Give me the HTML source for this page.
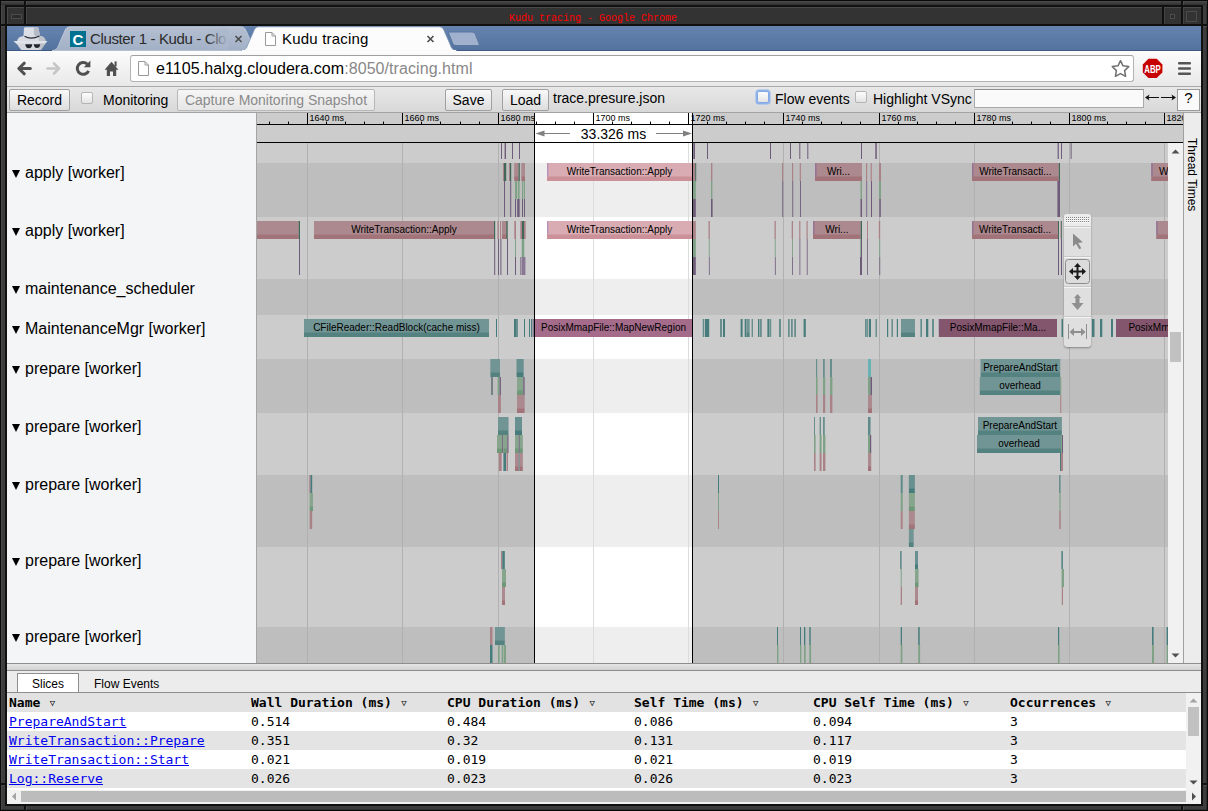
<!DOCTYPE html>
<html><head><meta charset="utf-8"><title>Kudu tracing - Google Chrome</title>
<style>
html,body{margin:0;padding:0}
body{width:1208px;height:811px;position:relative;overflow:hidden;background:#333;font-family:"Liberation Sans",sans-serif;font-size:14px;color:#000}
.a{position:absolute}
.btn{position:absolute;box-sizing:border-box;height:22px;border:1px solid #a0a0a0;border-radius:2px;background:linear-gradient(#f9f9f9,#dddddd);font-size:14px;line-height:20px;text-align:center;color:#000}
.cb{position:absolute;box-sizing:border-box;width:12px;height:12px;border:1px solid #b4b4b4;border-radius:2px;background:linear-gradient(#fdfdfd,#e4e4e4)}
.lbl{position:absolute;left:25px;font-size:16px;line-height:18px;white-space:nowrap;margin-top:1px}
.lbl i{position:absolute;left:-13px;top:5.5px;width:0;height:0;border-left:4.2px solid transparent;border-right:4.2px solid transparent;border-top:8.2px solid #000}
.th,.td{position:absolute;font-family:"DejaVu Sans Mono",monospace;font-size:13px;line-height:19px;white-space:nowrap}
.th{font-weight:bold;top:693px}
.th span{font-weight:normal;font-size:9px;position:relative;top:-1px;left:1.500px}
.lnk{color:#00e;text-decoration:underline}
.row{position:absolute;left:7px;width:1179px;height:19px}
</style></head><body>
<!-- window manager frame -->
<div class="a" style="left:0;top:0;width:1208px;height:811px;box-sizing:border-box;border:1px solid #0a0a0a;background:#3d3d3d"></div>
<div class="a" style="left:1px;top:1px;width:1206px;height:809px;box-sizing:border-box;border:1px solid #474747;border-right-color:#2e2e2e;border-bottom-color:#2e2e2e"></div>
<div class="a" style="left:1px;top:1px;width:1206px;height:4px;background:linear-gradient(#4b4b4b,#2f2f2f)"></div>
<div class="a" style="left:5px;top:5px;width:1198px;height:801px;box-sizing:border-box;border:2px solid #111;background:#333"></div>
<div class="a" style="left:7px;top:7px;width:1194px;height:1px;background:#4a4a4a"></div>
<div class="a" style="left:7px;top:7px;width:1px;height:17px;background:#4a4a4a"></div>
<div class="a" style="left:7px;top:24px;width:1194px;height:2px;background:#101010"></div>
<div class="a" style="left:24px;top:0;width:2px;height:26px;background:#101010"></div>
<div class="a" style="left:26px;top:1px;width:1px;height:4px;background:#4c4c4c"></div>
<div class="a" style="left:26px;top:8px;width:1px;height:16px;background:#444"></div>
<div class="a" style="left:0;top:24px;width:7px;height:2px;background:#101010"></div>
<div class="a" style="left:1px;top:26px;width:4px;height:1px;background:#4c4c4c"></div>
<div class="a" style="left:1181px;top:0;width:2px;height:26px;background:#101010"></div>
<div class="a" style="left:1183px;top:1px;width:1px;height:4px;background:#4c4c4c"></div>
<div class="a" style="left:1183px;top:8px;width:1px;height:16px;background:#444"></div>
<div class="a" style="left:1162px;top:7px;width:2px;height:18px;background:#101010"></div>
<div class="a" style="left:1164px;top:8px;width:1px;height:16px;background:#444"></div>
<div class="a" style="left:1201px;top:24px;width:7px;height:2px;background:#101010"></div>
<div class="a" style="left:1203px;top:26px;width:4px;height:1px;background:#4c4c4c"></div>
<div class="a" style="left:1181px;top:804px;width:2px;height:7px;background:#101010"></div>
<div class="a" style="left:1183px;top:806px;width:1px;height:4px;background:#4c4c4c"></div>
<div class="a" style="left:1201px;top:783px;width:7px;height:2px;background:#101010"></div>
<div class="a" style="left:1203px;top:785px;width:4px;height:1px;background:#4c4c4c"></div>
<div class="a" style="left:24px;top:804px;width:2px;height:7px;background:#101010"></div>
<div class="a" style="left:26px;top:806px;width:1px;height:4px;background:#4c4c4c"></div>
<div class="a" style="left:0;top:783px;width:7px;height:2px;background:#101010"></div>
<div class="a" style="left:1px;top:785px;width:4px;height:1px;background:#4c4c4c"></div>
<div class="a" style="left:11px;top:14px;width:11px;height:5px;box-sizing:border-box;border:1px solid #4c4c4c;background:#2c2c2c"></div>
<div class="a" style="left:1170px;top:14px;width:5px;height:5px;box-sizing:border-box;border:1px solid #4c4c4c;background:#2c2c2c"></div>
<div class="a" style="left:1186px;top:11px;width:11px;height:11px;box-sizing:border-box;border:1px solid #4c4c4c;background:#333"></div>
<div class="a" style="left:509px;top:12px;width:170px;height:14px;font-family:'Liberation Mono',monospace;font-size:10px;line-height:14px;color:#f00;white-space:pre;transform:scaleY(1.12)">Kudu tracing - Google Chrome</div>

<!-- chrome tab strip -->
<div class="a" style="left:7px;top:26px;width:1194px;height:25px;background:linear-gradient(#6684af,#53729e)"></div>
<div class="a" style="left:7px;top:50px;width:1194px;height:1px;background:#3f5a85"></div>
<svg class="a" style="left:7px;top:26px" width="1194" height="25" viewBox="7 26 1194 25">
 <defs><linearGradient id="tg" x1="0" y1="0" x2="0" y2="1"><stop offset="0" stop-color="#b4bfd0"/><stop offset="1" stop-color="#a2b0c7"/></linearGradient></defs>
 <path d="M52 50.5 C57 50.5 58 47 59.5 43 L65 30.500 C66.500 27 68 26.800 72 26.800 L239 26.800 C243 26.800 244.500 27 246 30.500 L251.500 43 C253 47 254 50.500 259 50.500 Z" fill="url(#tg)" stroke="#c6cfdc" stroke-width="0.800"/>
 <path d="M241 51 C246 50.5 247 47 248.5 43 L254 30.500 C255.500 27 257 26.800 261 26.800 L437 26.800 C441 26.800 442.500 27 444 30.500 L449.500 43 C451 47 452 50.500 457 51 Z" fill="#fcfcfc" stroke="#7e93b5" stroke-width="0.800"/>
 <rect x="242" y="50" width="214" height="1" fill="#f9f9f9"/>
 <path d="M449.500 32 L472 32 C474 32 475 33 475.500 34.500 L479 43.500 C479.500 45 479 45.500 477.500 45.500 L456 45.500 C454 45.500 453 44.500 452.500 43 L449 34 C448.500 32.500 448.500 32 449.500 32 Z" fill="#9fb1cd" stroke="#5a759f" stroke-width="1"/>
 <!-- incognito -->
 <g>
  <path d="M16 43 L45.500 43 L40.800 50 L21.200 50 Z" fill="#d4d7de"/>
  <path d="M23.300 39 L24 28.500 Q24.100 27.200 25.500 27.200 L36.800 27.200 Q38.300 27.200 38.600 28.600 L40.500 39 Z" fill="#dcdfe6"/>
  <path d="M34 27.200 L36.800 27.200 Q38.300 27.200 38.600 28.600 L40.500 39 L35.500 39 Q33 33 34 27.200 Z" fill="#b7bbc5"/>
  <path d="M17 41.500 Q17.500 36.200 24 36 L40 36 Q45.500 36.500 45.500 41.500 Z" fill="#d9dce3"/>
  <path d="M38 36 L40 36 Q45.500 36.500 45.500 41.500 L39 41.500 Z" fill="#c0c4cd"/>
  <path d="M13.500 41 L47.500 41 L45.500 43.600 L16 43.600 Z" fill="#e0e3e9"/>
  <path d="M38 43.600 L45.500 43.600 L41 50 L39.500 50 Z" fill="#bcc0c9"/>
  <path d="M24.500 36.300 Q31 40.200 39.500 36" stroke="#2a2d33" stroke-width="1.100" fill="none"/>
  <path d="M25.300 44.300 L32.300 44.300 Q32 48.300 28.800 48.300 Q25.600 48.300 25.300 44.300 Z M33.700 44.300 L40.200 44.300 Q39.900 48 37 48 Q34 48 33.700 44.300 Z" fill="#22252b"/>
 </g>
 <!-- favicon C -->
 <rect x="70" y="31" width="16" height="16" fill="#00728f"/>
 <text x="78" y="44.500" text-anchor="middle" font-family="Liberation Sans,sans-serif" font-weight="bold" font-size="15" fill="#fff">C</text>
 <!-- page icon -->
 <path d="M265.500 32.500 L272 32.500 L275.500 36 L275.500 45.500 L265.500 45.500 Z" fill="#fff" stroke="#999" stroke-width="1"/>
 <path d="M272 32.500 L272 36 L275.500 36" fill="none" stroke="#999" stroke-width="1"/>
 <!-- close x -->
 <path d="M235.500 36 L241.500 42 M241.500 36 L235.500 42" stroke="#4d4d4d" stroke-width="1.600"/>
 <path d="M427.500 36 L433.500 42 M433.500 36 L427.500 42" stroke="#4d4d4d" stroke-width="1.600"/>
</svg>
<div class="a" style="left:90px;top:29px;width:140px;height:20px;font-size:15px;letter-spacing:-0.37px;line-height:20px;white-space:nowrap;overflow:hidden;color:#2a2a2a">Cluster 1 - Kudu - Clo</div>
<div class="a" style="left:206px;top:29px;width:22px;height:20px;background:linear-gradient(90deg,rgba(171,184,204,0),#abb8cc)"></div>
<div class="a" style="left:282px;top:29px;width:140px;height:20px;font-size:15px;letter-spacing:0.19px;line-height:20px;white-space:nowrap;color:#000">Kudu tracing</div>

<!-- chrome toolbar -->
<div class="a" style="left:7px;top:51px;width:1194px;height:35px;background:linear-gradient(#fcfcfc,#e8e8e8)"></div>
<div class="a" style="left:7px;top:86px;width:1194px;height:1px;background:#a9a9a9"></div>
<div class="a" style="left:130px;top:55px;width:1004px;height:27px;box-sizing:border-box;border:1px solid #b3b3b3;border-top-color:#a0a0a0;border-radius:3px;background:#fff"></div>
<div class="a" style="left:156px;top:59px;height:20px;font-size:16px;line-height:20px;white-space:nowrap;letter-spacing:0.07px">e1105.halxg.cloudera.com<span style="color:#888">:8050/tracing.html</span></div>
<svg class="a" style="left:7px;top:51px" width="1194" height="35" viewBox="7 51 1194 35">
 <!-- back -->
 <g fill="none" stroke="#505050" stroke-width="3" stroke-linecap="round" stroke-linejoin="round"><path d="M24.300 63.200 L18.800 68.500 L24.300 73.800"/><path d="M19.500 68.500 L30.300 68.500"/></g>
 <!-- forward -->
 <g fill="none" stroke="#c6c6c6" stroke-width="2.600" stroke-linecap="round" stroke-linejoin="round"><path d="M54 63.500 L59 68.500 L54 73.500"/><path d="M47.500 68.500 L58.300 68.500"/></g>
 <!-- reload -->
 <path d="M87.300 64.200 A5.900 5.900 0 1 0 88.600 70.800" fill="none" stroke="#505050" stroke-width="3"/>
 <path d="M83.800 67.200 L90.400 67.200 L90.400 60.600 Z" fill="#505050"/>
 <!-- home -->
 <path d="M104.600 69.800 L111.500 61.800 L118.400 69.800 Z" fill="#505050"/>
 <path d="M106.800 69 L116.200 69 L116.200 76 L113 76 L113 71.500 L110 71.500 L110 76 L106.800 76 Z" fill="#505050"/>
 <rect x="114.600" y="61.400" width="2" height="5" fill="#505050"/>
 <!-- page icon in url -->
 <path d="M138.500 61.500 L145 61.500 L148.500 65 L148.500 75.500 L138.500 75.500 Z" fill="#fff" stroke="#999" stroke-width="1"/>
 <path d="M145 61.500 L145 65 L148.500 65" fill="none" stroke="#999" stroke-width="1"/>
 <!-- star -->
 <path d="M1120.5 60.7 L1123.0 65.8 L1128.7 66.6 L1124.6 70.6 L1125.6 76.3 L1120.5 73.6 L1115.4 76.3 L1116.4 70.6 L1112.3 66.6 L1118.0 65.8 Z" fill="#fff" stroke="#707070" stroke-width="1.500" stroke-linejoin="round"/>
 <!-- ABP -->
 <path d="M1148.500 58.700 L1156.700 58.700 L1162.400 64.400 L1162.400 72.400 L1156.700 78.100 L1148.500 78.100 L1142.800 72.400 L1142.800 64.400 Z" fill="#c70000"/>
 <text x="1152.500" y="72.600" text-anchor="middle" font-family="Liberation Sans,sans-serif" font-weight="bold" font-size="10" fill="#fff" textLength="16.500" lengthAdjust="spacingAndGlyphs">ABP</text>
 <!-- menu -->
 <rect x="1178" y="62" width="13" height="2.600" rx="1" fill="#555"/><rect x="1178" y="67.200" width="13" height="2.600" rx="1" fill="#555"/><rect x="1178" y="72.400" width="13" height="2.600" rx="1" fill="#555"/>
</svg>

<!-- app toolbar -->
<div class="a" style="left:7px;top:87px;width:1194px;height:25px;background:linear-gradient(#e8e8e8,#d8d8d8)"></div>
<div class="a" style="left:7px;top:112px;width:1194px;height:1px;background:#a3a3a3"></div>
<div class="btn" style="left:9px;top:89px;width:61px">Record</div>
<div class="cb" style="left:81px;top:92px"></div>
<div class="a" style="left:103px;top:91px;line-height:18px">Monitoring</div>
<div class="btn" style="left:177px;top:89px;width:198px;color:#8a8a8a;border-color:#b8b8b8;background:linear-gradient(#f6f6f6,#e6e6e6)">Capture Monitoring Snapshot</div>
<div class="btn" style="left:445px;top:89px;width:47px">Save</div>
<div class="btn" style="left:502px;top:89px;width:47px">Load</div>
<div class="a" style="left:553px;top:89px;line-height:18px">trace.presure.json</div>
<div class="cb" style="left:757px;top:91px;border-color:#84a9e2;box-shadow:0 0 0 1.500px rgba(128,170,238,.85)"></div>
<div class="a" style="left:775px;top:90px;line-height:18px">Flow events</div>
<div class="cb" style="left:855px;top:91px"></div>
<div class="a" style="left:873px;top:90px;line-height:18px">Highlight VSync</div>
<div class="a" style="left:974px;top:89px;width:170px;height:19px;box-sizing:border-box;border:1px solid #a9a9a9;border-top-color:#8f8f8f;background:#fafafa"></div>
<svg class="a" style="left:1144px;top:92px" width="33" height="12"><path d="M3 5.500 L15 5.500 M17 5.500 L30 5.500" stroke="#111" stroke-width="1" fill="none"/><path d="M1 5.500 L5.500 2.500 L4.500 5.500 L5.500 8.500 Z M32 5.500 L27.500 2.500 L28.500 5.500 L27.500 8.500 Z" fill="#111"/></svg>
<div class="a" style="left:1177px;top:89px;width:23px;height:22px;box-sizing:border-box;border:1px solid #999;background:#fafafa;text-align:center;font-size:15px;line-height:15px">?</div>

<!-- label column -->
<div class="a" style="left:7px;top:113px;width:249px;height:550px;background:#f4f5f7"></div>
<div class="a" style="left:256px;top:113px;width:1px;height:550px;background:#a5a5a5"></div>
<div class="lbl" style="top:163px"><i></i>apply [worker]</div>
<div class="lbl" style="top:221px"><i></i>apply [worker]</div>
<div class="lbl" style="top:279px"><i></i>maintenance_scheduler</div>
<div class="lbl" style="top:319px"><i></i>MaintenanceMgr [worker]</div>
<div class="lbl" style="top:359px"><i></i>prepare [worker]</div>
<div class="lbl" style="top:417px"><i></i>prepare [worker]</div>
<div class="lbl" style="top:475px"><i></i>prepare [worker]</div>
<div class="lbl" style="top:551px"><i></i>prepare [worker]</div>
<div class="lbl" style="top:627px"><i></i>prepare [worker]</div>

<svg id="ruler" width="926" height="30" viewBox="257 113 926 30" style="position:absolute;left:257px;top:113px;font-family:'Liberation Sans',sans-serif;font-size:9px">
<rect x="257" y="113" width="927" height="30" fill="#fff"/>
<rect x="269" y="121.6" width="1" height="2.4" fill="#000"/>
<rect x="288" y="121.6" width="1" height="2.4" fill="#000"/>
<rect x="307" y="113" width="1" height="11" fill="#000"/>
<text x="309.5" y="120.8">1640 ms</text>
<rect x="326" y="121.6" width="1" height="2.4" fill="#000"/>
<rect x="345" y="121.6" width="1" height="2.4" fill="#000"/>
<rect x="364" y="121.6" width="1" height="2.4" fill="#000"/>
<rect x="383" y="121.6" width="1" height="2.4" fill="#000"/>
<rect x="402" y="113" width="1" height="11" fill="#000"/>
<text x="404.5" y="120.8">1660 ms</text>
<rect x="421" y="121.6" width="1" height="2.4" fill="#000"/>
<rect x="440" y="121.6" width="1" height="2.4" fill="#000"/>
<rect x="460" y="121.6" width="1" height="2.4" fill="#000"/>
<rect x="479" y="121.6" width="1" height="2.4" fill="#000"/>
<rect x="498" y="113" width="1" height="11" fill="#000"/>
<text x="500.5" y="120.8">1680 ms</text>
<rect x="517" y="121.6" width="1" height="2.4" fill="#000"/>
<rect x="536" y="121.6" width="1" height="2.4" fill="#000"/>
<rect x="555" y="121.6" width="1" height="2.4" fill="#000"/>
<rect x="574" y="121.6" width="1" height="2.4" fill="#000"/>
<rect x="593" y="113" width="1" height="11" fill="#000"/>
<text x="595.5" y="120.8">1700 ms</text>
<rect x="612" y="121.6" width="1" height="2.4" fill="#000"/>
<rect x="631" y="121.6" width="1" height="2.4" fill="#000"/>
<rect x="650" y="121.6" width="1" height="2.4" fill="#000"/>
<rect x="669" y="121.6" width="1" height="2.4" fill="#000"/>
<rect x="688" y="113" width="1" height="11" fill="#000"/>
<text x="690.5" y="120.8">1720 ms</text>
<rect x="707" y="121.6" width="1" height="2.4" fill="#000"/>
<rect x="726" y="121.6" width="1" height="2.4" fill="#000"/>
<rect x="745" y="121.6" width="1" height="2.4" fill="#000"/>
<rect x="764" y="121.6" width="1" height="2.4" fill="#000"/>
<rect x="783" y="113" width="1" height="11" fill="#000"/>
<text x="785.5" y="120.8">1740 ms</text>
<rect x="802" y="121.6" width="1" height="2.4" fill="#000"/>
<rect x="821" y="121.6" width="1" height="2.4" fill="#000"/>
<rect x="841" y="121.6" width="1" height="2.4" fill="#000"/>
<rect x="860" y="121.6" width="1" height="2.4" fill="#000"/>
<rect x="879" y="113" width="1" height="11" fill="#000"/>
<text x="881.5" y="120.8">1760 ms</text>
<rect x="898" y="121.6" width="1" height="2.4" fill="#000"/>
<rect x="917" y="121.6" width="1" height="2.4" fill="#000"/>
<rect x="936" y="121.6" width="1" height="2.4" fill="#000"/>
<rect x="955" y="121.6" width="1" height="2.4" fill="#000"/>
<rect x="974" y="113" width="1" height="11" fill="#000"/>
<text x="976.5" y="120.8">1780 ms</text>
<rect x="993" y="121.6" width="1" height="2.4" fill="#000"/>
<rect x="1012" y="121.6" width="1" height="2.4" fill="#000"/>
<rect x="1031" y="121.6" width="1" height="2.4" fill="#000"/>
<rect x="1050" y="121.6" width="1" height="2.4" fill="#000"/>
<rect x="1069" y="113" width="1" height="11" fill="#000"/>
<text x="1071.5" y="120.8">1800 ms</text>
<rect x="1088" y="121.6" width="1" height="2.4" fill="#000"/>
<rect x="1107" y="121.6" width="1" height="2.4" fill="#000"/>
<rect x="1126" y="121.6" width="1" height="2.4" fill="#000"/>
<rect x="1145" y="121.6" width="1" height="2.4" fill="#000"/>
<rect x="1164" y="113" width="1" height="11" fill="#000"/>
<text x="1166.5" y="120.8">1820 ms</text>
<rect x="257" y="124" width="927" height="1" fill="#000"/>
<g stroke="#808080" stroke-width="1" fill="#808080"><line x1="540" y1="133.5" x2="570" y2="133.5"/><line x1="656" y1="133.5" x2="686" y2="133.5"/><path d="M535.500 133.5 L544.500 130.5 L544.500 136.5 Z" stroke="none"/><path d="M692 133.5 L683 130.5 L683 136.5 Z" stroke="none"/></g>
<text x="613.5" y="138.5" text-anchor="middle" style="font-size:14px">33.326 ms</text>
<rect x="257" y="113" width="277" height="29" fill="rgba(0,0,0,0.2)"/>
<rect x="693" y="113" width="491" height="29" fill="rgba(0,0,0,0.2)"/>
<rect x="534" y="113" width="1" height="30" fill="#000"/>
<rect x="692" y="113" width="1" height="30" fill="#000"/>
<rect x="257" y="142" width="927" height="1" fill="#000"/>
</svg>
<svg id="tracks" width="911" height="520" viewBox="257 143 911 520" style="position:absolute;left:257px;top:143px;font-family:'Liberation Sans',sans-serif;font-size:10px">
<rect x="257" y="143" width="911" height="520" fill="#fff"/>
<rect x="257" y="163" width="911" height="54" fill="#eee"/>
<rect x="257" y="279" width="911" height="36" fill="#eee"/>
<rect x="257" y="359" width="911" height="54" fill="#eee"/>
<rect x="257" y="475" width="911" height="72" fill="#eee"/>
<rect x="257" y="627" width="911" height="40" fill="#eee"/>
<rect x="307" y="143" width="1" height="520" fill="#dcdcdc"/>
<rect x="402" y="143" width="1" height="520" fill="#dcdcdc"/>
<rect x="498" y="143" width="1" height="520" fill="#dcdcdc"/>
<rect x="593" y="143" width="1" height="520" fill="#dcdcdc"/>
<rect x="688" y="143" width="1" height="520" fill="#dcdcdc"/>
<rect x="783" y="143" width="1" height="520" fill="#dcdcdc"/>
<rect x="879" y="143" width="1" height="520" fill="#dcdcdc"/>
<rect x="974" y="143" width="1" height="520" fill="#dcdcdc"/>
<rect x="1069" y="143" width="1" height="520" fill="#dcdcdc"/>
<rect x="1164" y="143" width="1" height="520" fill="#dcdcdc"/>
<rect x="501.0" y="141" width="1.0" height="18" fill="rgb(138,113,152)"/>
<rect x="504.6" y="141" width="1.4" height="18" fill="rgb(138,113,152)"/>
<rect x="512.0" y="141" width="1.0" height="18" fill="rgb(138,113,152)"/>
<rect x="519.0" y="141" width="1.0" height="18" fill="rgb(138,113,152)"/>
<rect x="693.3" y="141" width="1.7" height="18" fill="rgb(138,113,152)"/>
<rect x="707.0" y="141" width="1.0" height="18" fill="rgb(138,113,152)"/>
<rect x="770.0" y="141" width="1.0" height="18" fill="rgb(138,113,152)"/>
<rect x="790.0" y="141" width="1.0" height="18" fill="rgb(138,113,152)"/>
<rect x="799.3" y="141" width="1.0" height="18" fill="rgb(138,113,152)"/>
<rect x="807.3" y="141" width="1.0" height="18" fill="rgb(138,113,152)"/>
<rect x="861.0" y="141" width="1.0" height="18" fill="rgb(138,113,152)"/>
<rect x="875.3" y="141" width="1.5" height="18" fill="rgb(138,113,152)"/>
<rect x="1057.6" y="141" width="1.2" height="18" fill="rgb(138,113,152)"/>
<rect x="1061.0" y="141" width="1.0" height="18" fill="rgb(138,113,152)"/>
<rect x="1070.6" y="141" width="1.0" height="18" fill="rgb(138,113,152)"/>
<rect x="503.0" y="163" width="1.0" height="18" fill="rgb(212,163,170)"/>
<rect x="504.0" y="163" width="2.2" height="18" fill="rgb(80,129,109)"/>
<rect x="509.0" y="163" width="1.0" height="18" fill="rgb(212,163,170)"/>
<rect x="510.0" y="163" width="1.2" height="18" fill="rgb(80,129,109)"/>
<rect x="514.2" y="163" width="4.4" height="18" fill="rgb(203,144,152)"/>
<rect x="514.2" y="163" width="4.4" height="13.5" fill="rgba(255,255,255,0.25)"/>
<rect x="518.6" y="163" width="1.2" height="18" fill="rgb(80,129,109)"/>
<rect x="521.4" y="163" width="3.6" height="18" fill="rgb(203,144,152)"/>
<rect x="521.4" y="163" width="3.6" height="13.5" fill="rgba(255,255,255,0.25)"/>
<rect x="504.0" y="181" width="1.0" height="18" fill="rgb(138,113,152)"/>
<rect x="510.2" y="181" width="1.0" height="18" fill="rgb(138,113,152)"/>
<rect x="515.0" y="181" width="2.0" height="18" fill="rgb(159,202,168)"/>
<rect x="517.8" y="181" width="1.8" height="18" fill="rgb(159,202,168)"/>
<rect x="522.0" y="181" width="1.2" height="18" fill="rgb(159,202,168)"/>
<rect x="523.8" y="181" width="1.2" height="18" fill="rgb(159,202,168)"/>
<rect x="504.0" y="199" width="1.0" height="18" fill="rgb(138,113,152)"/>
<rect x="510.2" y="199" width="1.0" height="18" fill="rgb(138,113,152)"/>
<rect x="515.0" y="199" width="1.0" height="18" fill="rgb(138,113,152)"/>
<rect x="517.2" y="199" width="2.4" height="18" fill="rgb(138,113,152)"/>
<rect x="522.0" y="199" width="1.0" height="18" fill="rgb(138,113,152)"/>
<rect x="524.0" y="199" width="1.0" height="18" fill="rgb(138,113,152)"/>
<rect x="547.0" y="163" width="145.0" height="18" fill="rgb(203,144,152)"/>
<rect x="547.0" y="163" width="145.0" height="13.5" fill="rgba(255,255,255,0.25)"/>
<rect x="547.0" y="163" width="1.4" height="13.5" fill="rgba(150,110,190,0.45)"/>
<rect x="693.0" y="163" width="2.2" height="18" fill="rgb(212,163,170)"/>
<rect x="695.2" y="163" width="1.0" height="18" fill="rgb(80,129,109)"/>
<rect x="693.0" y="181" width="2.8" height="18" fill="rgb(159,202,168)"/>
<rect x="693.0" y="199" width="2.8" height="18" fill="rgb(138,113,152)"/>
<rect x="711.0" y="163" width="1.4" height="18" fill="rgb(212,163,170)"/>
<rect x="711.0" y="181" width="1.4" height="18" fill="rgb(159,202,168)"/>
<rect x="711.0" y="199" width="1.6" height="18" fill="rgb(138,113,152)"/>
<rect x="782.0" y="163" width="1.2" height="18" fill="rgb(212,163,170)"/>
<rect x="782.3" y="181" width="0.9" height="18" fill="rgb(138,113,152)"/>
<rect x="782.3" y="199" width="0.9" height="18" fill="rgb(138,113,152)"/>
<rect x="792.0" y="163" width="1.2" height="18" fill="rgb(212,163,170)"/>
<rect x="792.3" y="181" width="0.9" height="18" fill="rgb(138,113,152)"/>
<rect x="792.3" y="199" width="0.9" height="18" fill="rgb(138,113,152)"/>
<rect x="799.7" y="163" width="1.2" height="18" fill="rgb(212,163,170)"/>
<rect x="800.0" y="181" width="0.9" height="18" fill="rgb(138,113,152)"/>
<rect x="800.0" y="199" width="0.9" height="18" fill="rgb(138,113,152)"/>
<rect x="815.0" y="163" width="47.0" height="18" fill="rgb(203,144,152)"/>
<rect x="815.0" y="163" width="47.0" height="13.5" fill="rgba(255,255,255,0.25)"/>
<rect x="815.0" y="163" width="1.6" height="13.5" fill="rgba(150,110,190,0.45)"/>
<rect x="860.5" y="181" width="1.5" height="18" fill="rgb(159,202,168)"/>
<rect x="860.5" y="199" width="1.5" height="18" fill="rgb(138,113,152)"/>
<rect x="866.0" y="163" width="1.2" height="18" fill="rgb(212,163,170)"/>
<rect x="866.0" y="181" width="1.2" height="18" fill="rgb(170,150,185)"/>
<rect x="866.0" y="199" width="1.2" height="18" fill="rgb(170,150,185)"/>
<rect x="870.6" y="163" width="1.2" height="18" fill="rgb(212,163,170)"/>
<rect x="871.0" y="181" width="1.0" height="18" fill="rgb(138,113,152)"/>
<rect x="871.0" y="199" width="1.0" height="18" fill="rgb(138,113,152)"/>
<rect x="879.0" y="163" width="2.0" height="18" fill="rgb(212,163,170)"/>
<rect x="879.0" y="181" width="2.0" height="18" fill="rgb(159,202,168)"/>
<rect x="879.3" y="199" width="1.5" height="18" fill="rgb(138,113,152)"/>
<rect x="972.0" y="163" width="86.8" height="18" fill="rgb(203,144,152)"/>
<rect x="972.0" y="163" width="86.8" height="13.5" fill="rgba(255,255,255,0.25)"/>
<rect x="972.0" y="163" width="1.5" height="13.5" fill="rgba(150,110,190,0.45)"/>
<rect x="1058.8" y="163" width="1.2" height="18" fill="rgb(80,129,109)"/>
<rect x="1057.4" y="181" width="2.6" height="18" fill="rgb(138,113,152)"/>
<rect x="1057.4" y="199" width="2.6" height="18" fill="rgb(138,113,152)"/>
<rect x="1151.2" y="163" width="23.8" height="18" fill="rgb(203,144,152)"/>
<rect x="1151.2" y="163" width="23.8" height="13.5" fill="rgba(255,255,255,0.25)"/>
<rect x="1151.2" y="163" width="1.6" height="13.5" fill="rgba(150,110,190,0.45)"/>
<rect x="250.0" y="221" width="48.7" height="18" fill="rgb(203,144,152)"/>
<rect x="250.0" y="221" width="48.7" height="13.5" fill="rgba(255,255,255,0.25)"/>
<rect x="298.7" y="221" width="1.3" height="18" fill="rgb(80,129,109)"/>
<rect x="299.0" y="239" width="1.0" height="18" fill="rgb(138,113,152)"/>
<rect x="299.0" y="257" width="1.0" height="18" fill="rgb(138,113,152)"/>
<rect x="314.0" y="221" width="180.0" height="18" fill="rgb(203,144,152)"/>
<rect x="314.0" y="221" width="180.0" height="13.5" fill="rgba(255,255,255,0.25)"/>
<rect x="494.0" y="221" width="1.2" height="18" fill="rgb(80,129,109)"/>
<rect x="497.4" y="221" width="1.4" height="18" fill="rgb(212,163,170)"/>
<rect x="500.0" y="221" width="1.2" height="18" fill="rgb(212,163,170)"/>
<rect x="502.0" y="221" width="5.0" height="18" fill="rgb(203,144,152)"/>
<rect x="502.0" y="221" width="5.0" height="13.5" fill="rgba(255,255,255,0.25)"/>
<rect x="506.4" y="221" width="1.3" height="18" fill="rgb(80,129,109)"/>
<rect x="514.3" y="221" width="1.7" height="18" fill="rgb(212,163,170)"/>
<rect x="520.3" y="221" width="1.7" height="18" fill="rgb(212,163,170)"/>
<rect x="522.0" y="221" width="2.0" height="18" fill="rgb(80,129,109)"/>
<rect x="524.0" y="221" width="1.7" height="18" fill="rgb(212,163,170)"/>
<rect x="494.2" y="239" width="1.0" height="18" fill="rgb(138,113,152)"/>
<rect x="494.2" y="257" width="1.0" height="18" fill="rgb(138,113,152)"/>
<rect x="498.0" y="239" width="1.0" height="18" fill="rgb(138,113,152)"/>
<rect x="498.0" y="257" width="1.0" height="18" fill="rgb(138,113,152)"/>
<rect x="500.4" y="239" width="1.0" height="18" fill="rgb(138,113,152)"/>
<rect x="500.4" y="257" width="1.0" height="18" fill="rgb(138,113,152)"/>
<rect x="507.0" y="239" width="1.0" height="18" fill="rgb(138,113,152)"/>
<rect x="507.0" y="257" width="1.0" height="18" fill="rgb(138,113,152)"/>
<rect x="515.0" y="239" width="1.0" height="18" fill="rgb(159,202,168)"/>
<rect x="521.7" y="239" width="2.6" height="18" fill="rgb(159,202,168)"/>
<rect x="515.0" y="257" width="1.0" height="18" fill="rgb(138,113,152)"/>
<rect x="520.4" y="257" width="1.0" height="18" fill="rgb(138,113,152)"/>
<rect x="522.0" y="257" width="3.4" height="18" fill="rgb(170,150,185)"/>
<rect x="547.0" y="221" width="145.0" height="18" fill="rgb(203,144,152)"/>
<rect x="547.0" y="221" width="145.0" height="13.5" fill="rgba(255,255,255,0.25)"/>
<rect x="547.0" y="221" width="1.4" height="13.5" fill="rgba(150,110,190,0.45)"/>
<rect x="693.0" y="221" width="2.8" height="18" fill="rgb(212,163,170)"/>
<rect x="693.0" y="239" width="2.8" height="18" fill="rgb(159,202,168)"/>
<rect x="693.0" y="257" width="2.8" height="18" fill="rgb(138,113,152)"/>
<rect x="708.5" y="221" width="1.3" height="18" fill="rgb(212,163,170)"/>
<rect x="708.8" y="239" width="0.9" height="18" fill="rgb(159,202,168)"/>
<rect x="708.9" y="257" width="0.8" height="18" fill="rgb(138,113,152)"/>
<rect x="774.5" y="221" width="1.3" height="18" fill="rgb(212,163,170)"/>
<rect x="774.8" y="239" width="0.9" height="18" fill="rgb(159,202,168)"/>
<rect x="774.9" y="257" width="0.8" height="18" fill="rgb(138,113,152)"/>
<rect x="791.7" y="221" width="1.3" height="18" fill="rgb(212,163,170)"/>
<rect x="792.0" y="239" width="0.9" height="18" fill="rgb(159,202,168)"/>
<rect x="792.1" y="257" width="0.8" height="18" fill="rgb(138,113,152)"/>
<rect x="799.2" y="221" width="1.2" height="18" fill="rgb(212,163,170)"/>
<rect x="799.5" y="239" width="0.8" height="18" fill="rgb(138,113,152)"/>
<rect x="799.5" y="257" width="0.8" height="18" fill="rgb(138,113,152)"/>
<rect x="806.5" y="221" width="1.2" height="18" fill="rgb(212,163,170)"/>
<rect x="806.8" y="239" width="0.8" height="18" fill="rgb(138,113,152)"/>
<rect x="806.8" y="257" width="0.8" height="18" fill="rgb(138,113,152)"/>
<rect x="813.0" y="221" width="47.7" height="18" fill="rgb(203,144,152)"/>
<rect x="813.0" y="221" width="47.7" height="13.5" fill="rgba(255,255,255,0.25)"/>
<rect x="813.0" y="221" width="1.5" height="13.5" fill="rgba(150,110,190,0.45)"/>
<rect x="860.7" y="221" width="1.3" height="18" fill="rgb(80,129,109)"/>
<rect x="860.2" y="239" width="0.8" height="18" fill="rgb(159,202,168)"/>
<rect x="861.0" y="239" width="1.0" height="18" fill="rgb(138,113,152)"/>
<rect x="860.0" y="257" width="2.0" height="18" fill="rgb(138,113,152)"/>
<rect x="867.0" y="221" width="1.0" height="18" fill="rgb(212,163,170)"/>
<rect x="867.2" y="239" width="0.8" height="18" fill="rgb(138,113,152)"/>
<rect x="867.2" y="257" width="0.8" height="18" fill="rgb(138,113,152)"/>
<rect x="878.8" y="221" width="1.4" height="18" fill="rgb(212,163,170)"/>
<rect x="879.2" y="239" width="1.0" height="18" fill="rgb(159,202,168)"/>
<rect x="879.4" y="257" width="0.8" height="18" fill="rgb(138,113,152)"/>
<rect x="972.0" y="221" width="86.0" height="18" fill="rgb(203,144,152)"/>
<rect x="972.0" y="221" width="86.0" height="13.5" fill="rgba(255,255,255,0.25)"/>
<rect x="972.0" y="221" width="1.5" height="13.5" fill="rgba(150,110,190,0.45)"/>
<rect x="1058.0" y="221" width="1.0" height="18" fill="rgb(80,129,109)"/>
<rect x="1060.5" y="221" width="0.7" height="18" fill="rgb(212,163,170)"/>
<rect x="1061.2" y="221" width="0.8" height="18" fill="rgb(80,129,109)"/>
<rect x="1058.0" y="239" width="1.0" height="18" fill="rgb(138,113,152)"/>
<rect x="1061.0" y="239" width="1.0" height="18" fill="rgb(138,113,152)"/>
<rect x="1058.0" y="257" width="1.0" height="18" fill="rgb(138,113,152)"/>
<rect x="1061.0" y="257" width="1.0" height="18" fill="rgb(138,113,152)"/>
<rect x="1156.2" y="221" width="18.8" height="18" fill="rgb(203,144,152)"/>
<rect x="1156.2" y="221" width="18.8" height="13.5" fill="rgba(255,255,255,0.25)"/>
<rect x="1156.2" y="221" width="1.6" height="13.5" fill="rgba(150,110,190,0.45)"/>
<rect x="304.0" y="319" width="185.0" height="18" fill="rgb(104,163,162)"/>
<rect x="304.0" y="319" width="185.0" height="13.5" fill="rgba(255,255,255,0.25)"/>
<rect x="496.0" y="319" width="1.0" height="18" fill="rgb(88,156,155)"/>
<rect x="514.0" y="319" width="2.0" height="18" fill="rgb(88,156,155)"/>
<rect x="516.0" y="319" width="2.0" height="18" fill="rgb(131,179,178)"/>
<rect x="524.0" y="319" width="1.0" height="18" fill="rgb(88,156,155)"/>
<rect x="529.0" y="319" width="1.0" height="18" fill="rgb(88,156,155)"/>
<rect x="531.0" y="319" width="1.2" height="18" fill="rgb(88,156,155)"/>
<rect x="532.6" y="319" width="1.4" height="18" fill="rgb(170,150,185)"/>
<rect x="535.0" y="319" width="157.0" height="18" fill="rgb(164,108,138)"/>
<rect x="702.8" y="319" width="1.0" height="18" fill="rgb(88,156,155)"/>
<rect x="704.8" y="319" width="4.4" height="18" fill="rgb(88,156,155)"/>
<rect x="720.0" y="319" width="2.0" height="18" fill="rgb(131,179,178)"/>
<rect x="723.0" y="319" width="2.0" height="18" fill="rgb(88,156,155)"/>
<rect x="740.6" y="319" width="2.0" height="18" fill="rgb(88,156,155)"/>
<rect x="744.7" y="319" width="1.5" height="18" fill="rgb(88,156,155)"/>
<rect x="746.4" y="319" width="3.2" height="18" fill="rgb(104,163,162)"/>
<rect x="746.4" y="319" width="3.2" height="13.5" fill="rgba(255,255,255,0.25)"/>
<rect x="751.6" y="319" width="1.4" height="18" fill="rgb(131,179,178)"/>
<rect x="758.0" y="319" width="1.2" height="18" fill="rgb(88,156,155)"/>
<rect x="759.6" y="319" width="2.2" height="18" fill="rgb(131,179,178)"/>
<rect x="767.4" y="319" width="2.0" height="18" fill="rgb(88,156,155)"/>
<rect x="769.8" y="319" width="1.4" height="18" fill="rgb(131,179,178)"/>
<rect x="779.0" y="319" width="2.0" height="18" fill="rgb(131,179,178)"/>
<rect x="788.0" y="319" width="1.7" height="18" fill="rgb(131,179,178)"/>
<rect x="791.0" y="319" width="1.8" height="18" fill="rgb(131,179,178)"/>
<rect x="794.2" y="319" width="1.8" height="18" fill="rgb(131,179,178)"/>
<rect x="803.6" y="319" width="2.2" height="18" fill="rgb(88,156,155)"/>
<rect x="865.0" y="319" width="1.4" height="18" fill="rgb(131,179,178)"/>
<rect x="866.6" y="319" width="1.1" height="18" fill="rgb(88,156,155)"/>
<rect x="868.8" y="319" width="2.2" height="18" fill="rgb(88,156,155)"/>
<rect x="875.5" y="319" width="1.5" height="18" fill="rgb(131,179,178)"/>
<rect x="887.0" y="319" width="1.2" height="18" fill="rgb(88,156,155)"/>
<rect x="891.4" y="319" width="1.6" height="18" fill="rgb(131,179,178)"/>
<rect x="896.8" y="319" width="1.2" height="18" fill="rgb(88,156,155)"/>
<rect x="920.5" y="319" width="1.3" height="18" fill="rgb(88,156,155)"/>
<rect x="926.0" y="319" width="2.3" height="18" fill="rgb(88,156,155)"/>
<rect x="932.0" y="319" width="2.0" height="18" fill="rgb(131,179,178)"/>
<rect x="1061.5" y="319" width="1.5" height="18" fill="rgb(88,156,155)"/>
<rect x="1092.0" y="319" width="2.5" height="18" fill="rgb(88,156,155)"/>
<rect x="1100.0" y="319" width="2.3" height="18" fill="rgb(88,156,155)"/>
<rect x="1111.0" y="319" width="2.0" height="18" fill="rgb(88,156,155)"/>
<rect x="901.0" y="319" width="14.0" height="18" fill="rgb(104,163,162)"/>
<rect x="901.0" y="319" width="14.0" height="13.5" fill="rgba(255,255,255,0.25)"/>
<rect x="938.8" y="319" width="118.2" height="18" fill="rgb(164,108,138)"/>
<rect x="938.8" y="319" width="0.8" height="13.5" fill="rgba(150,110,190,0.45)"/>
<rect x="1116.0" y="319" width="59.0" height="18" fill="rgb(164,108,138)"/>
<rect x="1116.0" y="319" width="0.8" height="13.5" fill="rgba(150,110,190,0.45)"/>
<rect x="490.4" y="359" width="9.6" height="18" fill="rgb(104,163,162)"/>
<rect x="490.4" y="359" width="9.6" height="13.5" fill="rgba(255,255,255,0.25)"/>
<rect x="516.6" y="359" width="7.0" height="18" fill="rgb(88,156,155)"/>
<rect x="516.6" y="359" width="7.0" height="13.5" fill="rgba(255,255,255,0.25)"/>
<rect x="491.2" y="377" width="1.6" height="18" fill="rgb(125,140,149)"/>
<rect x="497.6" y="377" width="2.0" height="18" fill="rgb(159,202,168)"/>
<rect x="499.6" y="377" width="1.3" height="18" fill="rgb(138,113,152)"/>
<rect x="517.0" y="377" width="6.3" height="18" fill="rgb(139,191,150)"/>
<rect x="517.0" y="377" width="6.3" height="13.5" fill="rgba(255,255,255,0.25)"/>
<rect x="523.3" y="377" width="1.3" height="18" fill="rgb(138,113,152)"/>
<rect x="498.0" y="395" width="2.9" height="18" fill="rgb(212,163,170)"/>
<rect x="517.0" y="395" width="7.6" height="18" fill="rgb(203,144,152)"/>
<rect x="517.0" y="395" width="7.6" height="13.5" fill="rgba(255,255,255,0.25)"/>
<rect x="816.0" y="359" width="1.2" height="18" fill="rgb(131,179,178)"/>
<rect x="816.0" y="377" width="1.6" height="18" fill="rgb(159,202,168)"/>
<rect x="816.0" y="395" width="1.6" height="18" fill="rgb(212,163,170)"/>
<rect x="823.0" y="359" width="1.8" height="18" fill="rgb(131,179,178)"/>
<rect x="823.0" y="377" width="2.2" height="18" fill="rgb(159,202,168)"/>
<rect x="823.0" y="395" width="2.2" height="18" fill="rgb(212,163,170)"/>
<rect x="830.0" y="359" width="2.0" height="18" fill="rgb(131,179,178)"/>
<rect x="830.0" y="377" width="2.4" height="18" fill="rgb(159,202,168)"/>
<rect x="830.0" y="395" width="2.4" height="18" fill="rgb(212,163,170)"/>
<rect x="868.0" y="359" width="3.0" height="18" fill="rgb(130,222,226)"/>
<rect x="868.0" y="377" width="2.5" height="18" fill="rgb(159,202,168)"/>
<rect x="870.5" y="377" width="1.5" height="18" fill="rgb(138,113,152)"/>
<rect x="868.0" y="395" width="4.0" height="18" fill="rgb(203,144,152)"/>
<rect x="868.0" y="395" width="4.0" height="13.5" fill="rgba(255,255,255,0.25)"/>
<rect x="980.6" y="359" width="79.6" height="18" fill="rgb(104,163,162)"/>
<rect x="980.6" y="359" width="79.6" height="13.5" fill="rgba(255,255,255,0.25)"/>
<rect x="979.8" y="377" width="80.4" height="18" fill="rgb(104,163,162)"/>
<rect x="979.8" y="377" width="80.4" height="13.5" fill="rgba(255,255,255,0.25)"/>
<rect x="1060.2" y="377" width="1.1" height="18" fill="rgb(159,202,168)"/>
<rect x="1060.2" y="395" width="1.1" height="18" fill="rgb(212,163,170)"/>
<rect x="498.0" y="417" width="6.0" height="18" fill="rgb(104,163,162)"/>
<rect x="498.0" y="417" width="6.0" height="13.5" fill="rgba(255,255,255,0.25)"/>
<rect x="504.0" y="417" width="4.5" height="18" fill="rgb(104,163,162)"/>
<rect x="504.0" y="417" width="4.5" height="13.5" fill="rgba(255,255,255,0.25)"/>
<rect x="515.0" y="417" width="7.0" height="18" fill="rgb(88,156,155)"/>
<rect x="515.0" y="417" width="7.0" height="13.5" fill="rgba(255,255,255,0.25)"/>
<rect x="497.0" y="435" width="5.5" height="18" fill="rgb(139,191,150)"/>
<rect x="497.0" y="435" width="5.5" height="13.5" fill="rgba(255,255,255,0.25)"/>
<rect x="502.2" y="435" width="1.1" height="18" fill="rgb(138,113,152)"/>
<rect x="503.3" y="435" width="4.0" height="18" fill="rgb(139,191,150)"/>
<rect x="503.3" y="435" width="4.0" height="13.5" fill="rgba(255,255,255,0.25)"/>
<rect x="507.3" y="435" width="1.2" height="18" fill="rgb(138,113,152)"/>
<rect x="515.0" y="435" width="3.8" height="18" fill="rgb(139,191,150)"/>
<rect x="515.0" y="435" width="3.8" height="13.5" fill="rgba(255,255,255,0.25)"/>
<rect x="518.8" y="435" width="1.0" height="18" fill="rgb(138,113,152)"/>
<rect x="519.8" y="435" width="3.0" height="18" fill="rgb(139,191,150)"/>
<rect x="519.8" y="435" width="3.0" height="13.5" fill="rgba(255,255,255,0.25)"/>
<rect x="498.8" y="453" width="2.9" height="18" fill="rgb(212,163,170)"/>
<rect x="503.4" y="453" width="2.6" height="18" fill="rgb(88,156,155)"/>
<rect x="506.5" y="453" width="1.5" height="18" fill="rgb(212,163,170)"/>
<rect x="515.0" y="453" width="3.8" height="18" fill="rgb(203,144,152)"/>
<rect x="515.0" y="453" width="3.8" height="13.5" fill="rgba(255,255,255,0.25)"/>
<rect x="518.8" y="453" width="0.8" height="18" fill="rgb(88,156,155)"/>
<rect x="519.8" y="453" width="3.0" height="18" fill="rgb(203,144,152)"/>
<rect x="519.8" y="453" width="3.0" height="13.5" fill="rgba(255,255,255,0.25)"/>
<rect x="814.0" y="417" width="1.0" height="18" fill="rgb(131,179,178)"/>
<rect x="814.0" y="435" width="1.6" height="18" fill="rgb(159,202,168)"/>
<rect x="814.0" y="453" width="1.6" height="18" fill="rgb(212,163,170)"/>
<rect x="819.6" y="417" width="1.4" height="18" fill="rgb(131,179,178)"/>
<rect x="819.6" y="435" width="2.0" height="18" fill="rgb(159,202,168)"/>
<rect x="819.6" y="453" width="2.0" height="18" fill="rgb(212,163,170)"/>
<rect x="823.0" y="417" width="1.8" height="18" fill="rgb(131,179,178)"/>
<rect x="823.0" y="435" width="2.4" height="18" fill="rgb(159,202,168)"/>
<rect x="823.0" y="453" width="2.4" height="18" fill="rgb(212,163,170)"/>
<rect x="868.0" y="417" width="2.5" height="18" fill="rgb(118,173,173)"/>
<rect x="868.0" y="435" width="2.0" height="18" fill="rgb(159,202,168)"/>
<rect x="870.0" y="435" width="1.2" height="18" fill="rgb(138,113,152)"/>
<rect x="868.0" y="453" width="3.2" height="18" fill="rgb(203,144,152)"/>
<rect x="868.0" y="453" width="3.2" height="13.5" fill="rgba(255,255,255,0.25)"/>
<rect x="978.0" y="417" width="83.8" height="18" fill="rgb(104,163,162)"/>
<rect x="978.0" y="417" width="83.8" height="13.5" fill="rgba(255,255,255,0.25)"/>
<rect x="977.0" y="435" width="84.0" height="18" fill="rgb(104,163,162)"/>
<rect x="977.0" y="435" width="84.0" height="13.5" fill="rgba(255,255,255,0.25)"/>
<rect x="1061.0" y="435" width="1.0" height="18" fill="rgb(159,202,168)"/>
<rect x="1062.0" y="435" width="1.0" height="18" fill="rgb(138,113,152)"/>
<rect x="1060.0" y="453" width="1.0" height="18" fill="rgb(88,156,155)"/>
<rect x="1061.0" y="453" width="2.0" height="18" fill="rgb(212,163,170)"/>
<rect x="309.3" y="475" width="1.2" height="18" fill="rgb(212,163,170)"/>
<rect x="310.5" y="475" width="1.7" height="18" fill="rgb(88,156,155)"/>
<rect x="309.7" y="493" width="3.3" height="18" fill="rgb(139,191,150)"/>
<rect x="309.7" y="493" width="3.3" height="13.5" fill="rgba(255,255,255,0.25)"/>
<rect x="309.7" y="511" width="2.5" height="18" fill="rgb(212,163,170)"/>
<rect x="718.0" y="475" width="1.0" height="18" fill="rgb(88,156,155)"/>
<rect x="718.0" y="493" width="1.0" height="18" fill="rgb(159,202,168)"/>
<rect x="718.0" y="511" width="1.0" height="18" fill="rgb(212,163,170)"/>
<rect x="900.7" y="475" width="2.0" height="18" fill="rgb(118,173,173)"/>
<rect x="900.7" y="493" width="2.0" height="18" fill="rgb(159,202,168)"/>
<rect x="900.7" y="511" width="2.0" height="18" fill="rgb(212,163,170)"/>
<rect x="908.9" y="475" width="5.9" height="18" fill="rgb(88,156,155)"/>
<rect x="908.9" y="475" width="5.9" height="13.5" fill="rgba(255,255,255,0.25)"/>
<rect x="908.9" y="493" width="5.9" height="18" fill="rgb(139,191,150)"/>
<rect x="908.9" y="493" width="5.9" height="13.5" fill="rgba(255,255,255,0.25)"/>
<rect x="908.9" y="511" width="5.9" height="18" fill="rgb(203,144,152)"/>
<rect x="908.9" y="511" width="5.9" height="13.5" fill="rgba(255,255,255,0.25)"/>
<rect x="908.9" y="529" width="4.7" height="18" fill="rgb(104,163,162)"/>
<rect x="908.9" y="529" width="4.7" height="13.5" fill="rgba(255,255,255,0.25)"/>
<rect x="1059.0" y="475" width="1.6" height="18" fill="rgb(131,179,178)"/>
<rect x="1059.4" y="493" width="1.2" height="18" fill="rgb(159,202,168)"/>
<rect x="1059.2" y="511" width="1.6" height="18" fill="rgb(212,163,170)"/>
<rect x="501.0" y="551" width="1.3" height="18" fill="rgb(212,163,170)"/>
<rect x="502.3" y="551" width="2.5" height="18" fill="rgb(88,156,155)"/>
<rect x="502.0" y="569" width="4.0" height="18" fill="rgb(139,191,150)"/>
<rect x="502.0" y="569" width="4.0" height="13.5" fill="rgba(255,255,255,0.25)"/>
<rect x="502.0" y="587" width="3.0" height="18" fill="rgb(203,144,152)"/>
<rect x="502.0" y="587" width="3.0" height="13.5" fill="rgba(255,255,255,0.25)"/>
<rect x="900.0" y="551" width="1.7" height="18" fill="rgb(131,179,178)"/>
<rect x="900.7" y="569" width="1.0" height="18" fill="rgb(159,202,168)"/>
<rect x="900.7" y="587" width="1.3" height="18" fill="rgb(212,163,170)"/>
<rect x="915.0" y="551" width="3.0" height="18" fill="rgb(88,156,155)"/>
<rect x="915.0" y="551" width="3.0" height="13.5" fill="rgba(255,255,255,0.25)"/>
<rect x="915.0" y="569" width="3.5" height="18" fill="rgb(139,191,150)"/>
<rect x="915.0" y="569" width="3.5" height="13.5" fill="rgba(255,255,255,0.25)"/>
<rect x="915.0" y="587" width="3.0" height="18" fill="rgb(203,144,152)"/>
<rect x="915.0" y="587" width="3.0" height="13.5" fill="rgba(255,255,255,0.25)"/>
<rect x="1061.3" y="551" width="1.7" height="18" fill="rgb(118,173,173)"/>
<rect x="1061.6" y="569" width="2.4" height="18" fill="rgb(159,202,168)"/>
<rect x="1061.8" y="587" width="1.2" height="18" fill="rgb(212,163,170)"/>
<rect x="490.0" y="627" width="2.5" height="18" fill="rgb(212,163,170)"/>
<rect x="495.0" y="627" width="9.8" height="18" fill="rgb(104,163,162)"/>
<rect x="495.0" y="627" width="9.8" height="13.5" fill="rgba(255,255,255,0.25)"/>
<rect x="490.0" y="645" width="2.5" height="18" fill="rgb(88,156,155)"/>
<rect x="498.0" y="645" width="1.6" height="18" fill="rgb(159,202,168)"/>
<rect x="501.6" y="645" width="1.8" height="18" fill="rgb(159,202,168)"/>
<rect x="504.0" y="645" width="2.0" height="18" fill="rgb(159,202,168)"/>
<rect x="777.0" y="627" width="1.0" height="18" fill="rgb(88,156,155)"/>
<rect x="777.0" y="645" width="1.4" height="18" fill="rgb(159,202,168)"/>
<rect x="800.0" y="627" width="1.0" height="18" fill="rgb(88,156,155)"/>
<rect x="800.0" y="645" width="1.4" height="18" fill="rgb(159,202,168)"/>
<rect x="804.0" y="627" width="1.3" height="18" fill="rgb(88,156,155)"/>
<rect x="804.0" y="645" width="1.7" height="18" fill="rgb(159,202,168)"/>
<rect x="809.3" y="627" width="1.4" height="18" fill="rgb(88,156,155)"/>
<rect x="809.3" y="645" width="1.8" height="18" fill="rgb(159,202,168)"/>
<rect x="900.7" y="627" width="1.3" height="18" fill="rgb(88,156,155)"/>
<rect x="900.7" y="645" width="1.7" height="18" fill="rgb(159,202,168)"/>
<rect x="918.2" y="627" width="1.5" height="18" fill="rgb(88,156,155)"/>
<rect x="918.2" y="645" width="1.9" height="18" fill="rgb(159,202,168)"/>
<rect x="1058.0" y="627" width="1.2" height="18" fill="rgb(88,156,155)"/>
<rect x="1058.0" y="645" width="1.6" height="18" fill="rgb(159,202,168)"/>
<rect x="1152.0" y="627" width="1.6" height="18" fill="rgb(88,156,155)"/>
<rect x="1152.0" y="645" width="2.0" height="18" fill="rgb(159,202,168)"/>
<rect x="1166.6" y="627" width="1.4" height="18" fill="rgb(88,156,155)"/>
<rect x="1166.6" y="645" width="1.8" height="18" fill="rgb(159,202,168)"/>
<text x="619.5" y="175.0" text-anchor="middle">WriteTransaction::Apply</text>
<text x="838.5" y="175.0" text-anchor="middle">Wri...</text>
<text x="1015.4" y="175.0" text-anchor="middle">WriteTransacti...</text>
<text x="1159" y="175.0">W</text>
<text x="404.0" y="233.0" text-anchor="middle">WriteTransaction::Apply</text>
<text x="619.5" y="233.0" text-anchor="middle">WriteTransaction::Apply</text>
<text x="836.9" y="233.0" text-anchor="middle">Wri...</text>
<text x="1015.0" y="233.0" text-anchor="middle">WriteTransacti...</text>
<text x="396.5" y="331.0" text-anchor="middle">CFileReader::ReadBlock(cache miss)</text>
<text x="613.5" y="331.0" text-anchor="middle">PosixMmapFile::MapNewRegion</text>
<text x="997.9" y="331.0" text-anchor="middle">PosixMmapFile::Ma...</text>
<text x="1128.4" y="331.0">PosixMm</text>
<text x="1020.4" y="371.0" text-anchor="middle">PrepareAndStart</text>
<text x="1020.0" y="389.0" text-anchor="middle">overhead</text>
<text x="1019.9" y="429.0" text-anchor="middle">PrepareAndStart</text>
<text x="1019.0" y="447.0" text-anchor="middle">overhead</text>
<rect x="257" y="143" width="277" height="520" fill="rgba(0,0,0,0.2)"/>
<rect x="693" y="143" width="475" height="520" fill="rgba(0,0,0,0.2)"/>
<rect x="534" y="143" width="1" height="520" fill="#000"/>
<rect x="692" y="143" width="1" height="520" fill="#000"/>
</svg>

<!-- track scrollbar -->
<div class="a" style="left:1168px;top:143px;width:15px;height:520px;background:#f1f1f1"></div>
<div class="a" style="left:1170px;top:332px;width:11px;height:30px;background:#c1c1c1"></div>
<svg class="a" style="left:1168px;top:143px" width="16" height="520"><path d="M3.500 10.500 L7.500 6.500 L11.500 10.500 Z M3.500 510.500 L7.500 514.500 L11.500 510.500 Z" fill="#505050"/></svg>
<!-- Thread Times side tab -->
<div class="a" style="left:1183px;top:113px;width:1px;height:550px;background:#a0a0a0"></div>
<div class="a" style="left:1184px;top:113px;width:17px;height:550px;background:#ececec"></div>
<div class="a" style="left:1200px;top:138px;width:100px;height:16px;font-size:12px;line-height:16px;transform-origin:0 0;transform:rotate(90deg);white-space:nowrap">Thread Times</div>

<!-- mouse mode selector -->
<div class="a" style="left:1064px;top:214px;width:27px;height:133px;border-radius:3px;background:#dfdfdf;box-shadow:0 1px 2px rgba(0,0,0,.35)"></div>
<div class="a" style="left:1064px;top:214px;width:27px;height:12px;border-radius:3px 3px 0 0;background:#ececec"></div>
<svg class="a" style="left:1064px;top:214px" width="27" height="133" viewBox="1064 214 27 133">
 <g fill="#858585"><rect x="1066" y="217" width="1" height="1"/><rect x="1068" y="217" width="1" height="1"/><rect x="1070" y="217" width="1" height="1"/><rect x="1072" y="217" width="1" height="1"/><rect x="1074" y="217" width="1" height="1"/><rect x="1076" y="217" width="1" height="1"/><rect x="1078" y="217" width="1" height="1"/><rect x="1080" y="217" width="1" height="1"/><rect x="1082" y="217" width="1" height="1"/><rect x="1084" y="217" width="1" height="1"/><rect x="1086" y="217" width="1" height="1"/><rect x="1088" y="217" width="1" height="1"/><rect x="1066" y="219" width="1" height="1"/><rect x="1068" y="219" width="1" height="1"/><rect x="1070" y="219" width="1" height="1"/><rect x="1072" y="219" width="1" height="1"/><rect x="1074" y="219" width="1" height="1"/><rect x="1076" y="219" width="1" height="1"/><rect x="1078" y="219" width="1" height="1"/><rect x="1080" y="219" width="1" height="1"/><rect x="1082" y="219" width="1" height="1"/><rect x="1084" y="219" width="1" height="1"/><rect x="1086" y="219" width="1" height="1"/><rect x="1088" y="219" width="1" height="1"/><rect x="1066" y="221" width="1" height="1"/><rect x="1068" y="221" width="1" height="1"/><rect x="1070" y="221" width="1" height="1"/><rect x="1072" y="221" width="1" height="1"/><rect x="1074" y="221" width="1" height="1"/><rect x="1076" y="221" width="1" height="1"/><rect x="1078" y="221" width="1" height="1"/><rect x="1080" y="221" width="1" height="1"/><rect x="1082" y="221" width="1" height="1"/><rect x="1084" y="221" width="1" height="1"/><rect x="1086" y="221" width="1" height="1"/><rect x="1088" y="221" width="1" height="1"/></g>
 <g fill="#fff"><rect x="1066" y="218" width="1" height="1"/><rect x="1068" y="218" width="1" height="1"/><rect x="1070" y="218" width="1" height="1"/><rect x="1072" y="218" width="1" height="1"/><rect x="1074" y="218" width="1" height="1"/><rect x="1076" y="218" width="1" height="1"/><rect x="1078" y="218" width="1" height="1"/><rect x="1080" y="218" width="1" height="1"/><rect x="1082" y="218" width="1" height="1"/><rect x="1084" y="218" width="1" height="1"/><rect x="1086" y="218" width="1" height="1"/><rect x="1088" y="218" width="1" height="1"/><rect x="1066" y="220" width="1" height="1"/><rect x="1068" y="220" width="1" height="1"/><rect x="1070" y="220" width="1" height="1"/><rect x="1072" y="220" width="1" height="1"/><rect x="1074" y="220" width="1" height="1"/><rect x="1076" y="220" width="1" height="1"/><rect x="1078" y="220" width="1" height="1"/><rect x="1080" y="220" width="1" height="1"/><rect x="1082" y="220" width="1" height="1"/><rect x="1084" y="220" width="1" height="1"/><rect x="1086" y="220" width="1" height="1"/><rect x="1088" y="220" width="1" height="1"/><rect x="1066" y="222" width="1" height="1"/><rect x="1068" y="222" width="1" height="1"/><rect x="1070" y="222" width="1" height="1"/><rect x="1072" y="222" width="1" height="1"/><rect x="1074" y="222" width="1" height="1"/><rect x="1076" y="222" width="1" height="1"/><rect x="1078" y="222" width="1" height="1"/><rect x="1080" y="222" width="1" height="1"/><rect x="1082" y="222" width="1" height="1"/><rect x="1084" y="222" width="1" height="1"/><rect x="1086" y="222" width="1" height="1"/><rect x="1088" y="222" width="1" height="1"/></g>
 <rect x="1064" y="226" width="27" height="1" fill="#c8c8c8"/><rect x="1064" y="227" width="27" height="1" fill="#f4f4f4"/>
 <rect x="1064" y="256" width="27" height="1" fill="#c8c8c8"/><rect x="1064" y="257" width="27" height="1" fill="#f4f4f4"/>
 <rect x="1064" y="286" width="27" height="1" fill="#c8c8c8"/><rect x="1064" y="287" width="27" height="1" fill="#f4f4f4"/>
 <rect x="1064" y="316" width="27" height="1" fill="#c8c8c8"/><rect x="1064" y="317" width="27" height="1" fill="#f4f4f4"/>
 <!-- select arrow -->
 <path d="M1073 233.500 L1073 246.500 L1076 243.800 L1079.300 249.300 L1081.300 248.200 L1078.200 243 L1082.800 242.300 Z" fill="#8a8a8a"/>
 <!-- pan active -->
 <rect x="1065.500" y="259.500" width="24" height="24" rx="3" fill="#dcdcdc" stroke="#8c8c8c"/>
 <path d="M1077.500 263 L1081 267 L1078.500 267 L1078.500 270.500 L1082 270.500 L1082 268 L1086 271.500 L1082 275 L1082 272.500 L1078.500 272.500 L1078.500 276 L1081 276 L1077.500 280 L1074 276 L1076.500 276 L1076.500 272.500 L1073 272.500 L1073 275 L1069 271.500 L1073 268 L1073 270.500 L1076.500 270.500 L1076.500 267 L1074 267 Z" fill="#1a1a1a"/>
 <!-- zoom -->
 <path d="M1077.500 294 L1081 298 L1079.500 298 L1079.500 303 L1083.500 303 L1077.500 310 L1071.500 303 L1075.500 303 L1075.500 298 L1074 298 Z" fill="#8f8f8f"/>
 <!-- timing -->
 <path d="M1068.500 324 L1068.500 339 M1086.500 324 L1086.500 339" stroke="#8f8f8f" stroke-width="1"/>
 <path d="M1069.500 332 L1074 328 L1074 331 L1081 331 L1081 328 L1085.500 332 L1081 336 L1081 333 L1074 333 L1074 336 Z" fill="#8f8f8f"/>
</svg>

<!-- bottom panel -->
<div class="a" style="left:7px;top:663px;width:1194px;height:1px;background:#8e8e8e"></div>
<div class="a" style="left:7px;top:664px;width:1194px;height:6px;background:linear-gradient(#e5e5e5,#d1d1d1)"></div>
<div class="a" style="left:7px;top:670px;width:1194px;height:1px;background:#8e8e8e"></div>
<div class="a" style="left:7px;top:671px;width:1194px;height:21px;background:#ececec"></div>
<div class="a" style="left:7px;top:692px;width:1194px;height:1px;background:#8e8e8e"></div>
<div class="a" style="left:17px;top:673px;width:62px;height:19px;box-sizing:border-box;border:1px solid #8e8e8e;border-bottom:none;background:#fff;font-size:12px;line-height:21px;text-align:center">Slices</div>
<div class="a" style="left:94px;top:674px;font-size:12px;line-height:21px">Flow Events</div>
<div class="a" style="left:7px;top:693px;width:1194px;height:96px;background:#fff"></div>
<div class="row" style="top:693px;background:#e2e2e2"></div>
<div class="row" style="top:731px;background:#e4e4e4"></div>
<div class="row" style="top:769px;background:#e4e4e4"></div>
<div class="th" style="left:9px">Name <span>&#9661;</span></div>
<div class="th" style="left:251px">Wall Duration (ms) <span>&#9661;</span></div>
<div class="th" style="left:447px">CPU Duration (ms) <span>&#9661;</span></div>
<div class="th" style="left:634px">Self Time (ms) <span>&#9661;</span></div>
<div class="th" style="left:813px">CPU Self Time (ms) <span>&#9661;</span></div>
<div class="th" style="left:1010px">Occurrences <span>&#9661;</span></div>
<div class="td lnk" style="left:9px;top:712px">PrepareAndStart</div><div class="td" style="left:251px;top:712px">0.514</div><div class="td" style="left:447px;top:712px">0.484</div><div class="td" style="left:634px;top:712px">0.086</div><div class="td" style="left:813px;top:712px">0.094</div><div class="td" style="left:1010px;top:712px">3</div>
<div class="td lnk" style="left:9px;top:731px">WriteTransaction::Prepare</div><div class="td" style="left:251px;top:731px">0.351</div><div class="td" style="left:447px;top:731px">0.32</div><div class="td" style="left:634px;top:731px">0.131</div><div class="td" style="left:813px;top:731px">0.117</div><div class="td" style="left:1010px;top:731px">3</div>
<div class="td lnk" style="left:9px;top:750px">WriteTransaction::Start</div><div class="td" style="left:251px;top:750px">0.021</div><div class="td" style="left:447px;top:750px">0.019</div><div class="td" style="left:634px;top:750px">0.021</div><div class="td" style="left:813px;top:750px">0.019</div><div class="td" style="left:1010px;top:750px">3</div>
<div class="td lnk" style="left:9px;top:769px">Log::Reserve</div><div class="td" style="left:251px;top:769px">0.026</div><div class="td" style="left:447px;top:769px">0.023</div><div class="td" style="left:634px;top:769px">0.026</div><div class="td" style="left:813px;top:769px">0.023</div><div class="td" style="left:1010px;top:769px">3</div>
<!-- panel scrollbars -->
<div class="a" style="left:1186px;top:693px;width:15px;height:96px;background:#f1f1f1"></div>
<div class="a" style="left:1188px;top:707px;width:11px;height:29px;background:#c1c1c1"></div>
<div class="a" style="left:7px;top:788px;width:1194px;height:16px;background:#f1f1f1"></div>
<div class="a" style="left:7px;top:788px;width:1179px;height:2px;background:#fff"></div>
<div class="a" style="left:21px;top:791px;width:1165px;height:11px;background:#bcbcbc"></div>
<svg class="a" style="left:7px;top:693px" width="1194" height="111" viewBox="7 693 1194 111"><path d="M1189.500 780.500 L1193.500 784.500 L1197.500 780.500 Z M1192 792.500 L1196 796.500 L1192 800.500 Z" fill="#505050"/><path d="M16 792.500 L12 796.500 L16 800.500 Z M1189.500 702.500 L1193.500 698.500 L1197.500 702.500 Z" fill="#a3a3a3"/></svg>
</body></html>
